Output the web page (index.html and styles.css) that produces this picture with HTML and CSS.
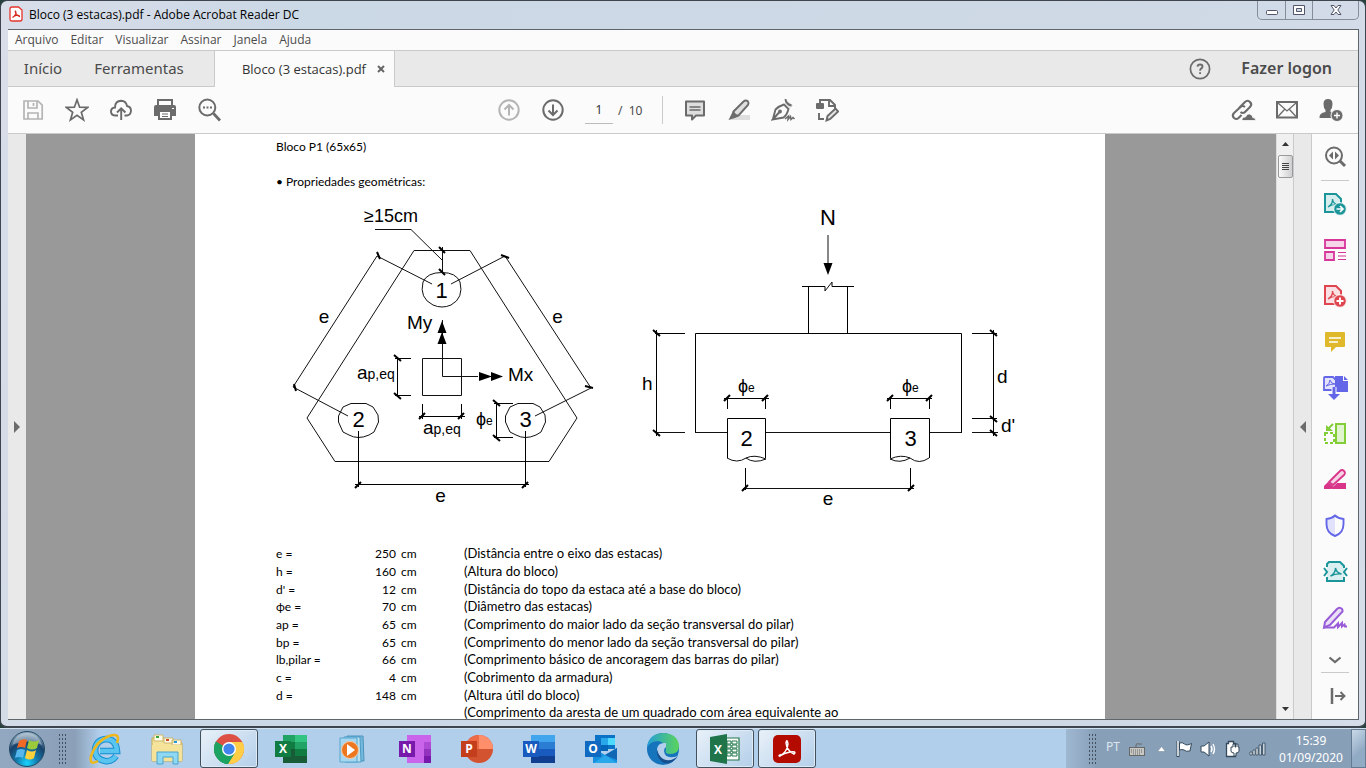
FILE: index.html
```html
<!DOCTYPE html>
<html lang="pt-BR">
<head>
<meta charset="utf-8">
<title>Bloco (3 estacas).pdf - Adobe Acrobat Reader DC</title>
<link rel="stylesheet" href="styles.css">
</head>
<body>
<div class="window">
  <header class="titlebar">
    <svg class="app-icon" width="14" height="16" viewBox="0 0 14 16"><path d="M1 3Q1 1 3 1H9.500L13 4V13Q13 15 11 15H3Q1 15 1 13Z" fill="#fff" stroke="#e5342c" stroke-width="1.300"/><path d="M3.500 11.500C6 10 8 6.500 6.500 5C5.500 5 7 9 10.500 10.500C11 8.500 6 9 3.500 11.500Z" fill="none" stroke="#d7261f" stroke-width="1.100"/></svg>
    <h1 class="window-title">Bloco (3 estacas).pdf - Adobe Acrobat Reader DC</h1>
    <div class="window-controls">
      <button class="control" aria-label="Minimizar"><svg width="12" height="14"><rect x=".5" y="7.500" width="11" height="4" rx="1" fill="#fff" stroke="#555569"/></svg></button>
      <button class="control" aria-label="Restaurar"><svg width="12" height="14"><path d="M.5 2.500h11v9H.5ZM3.500 5.500v3h5v-3Z" fill="#fff" stroke="#555569" fill-rule="evenodd"/></svg></button>
      <button class="control control-close" aria-label="Fechar"><svg width="12" height="14"><path d="M1 2.500h3L6 5l2-2.500h3L7.800 7 11 11.500H8L6 9l-2 2.500H1L4.200 7Z" fill="#fff" stroke="#555569"/></svg></button>
    </div>
  </header>
  <div class="client">
    <nav class="menubar">
      <button class="menu">Arquivo</button><button class="menu">Editar</button><button class="menu">Visualizar</button><button class="menu">Assinar</button><button class="menu">Janela</button><button class="menu">Ajuda</button>
    </nav>
    <div class="tabs">
      <button class="tab tab-home">Início</button>
      <button class="tab tab-tools">Ferramentas</button>
      <div class="tab-current"><span>Bloco (3 estacas).pdf</span><button class="tab-close" aria-label="Fechar guia"><svg width="8" height="8"><path d="M1 1l6 6M7 1L1 7" stroke="#666" stroke-width="2"/></svg></button></div>
      <button class="help" aria-label="Ajuda"><svg width="22" height="22" viewBox="0 0 22 22" fill="none" stroke="#6b6b6b" stroke-width="1.700"><circle cx="11" cy="11" r="9.600"/><path d="M8.500 8.700Q8.700 6.500 11.100 6.500Q13.500 6.500 13.500 8.500Q13.500 9.800 12 10.600Q11.100 11.200 11.100 12.700M11.100 14.300v1.800" stroke-width="1.900"/></svg></button>
      <button class="login">Fazer logon</button>
    </div>
    <div class="toolbar">
      <div class="tools">
        <button class="tool" aria-label="Salvar"><svg width="24" height="24" viewBox="0 0 24 24" fill="none" stroke="#b4b4b4" stroke-width="1.700"><path d="M3 3h14l4.200 4.200V21H3Z"/><path d="M7 3v7h9V3M12.500 5v3M7 21v-6h10v6"/></svg></button>
        <button class="tool" aria-label="Favorito"><svg width="24" height="24" viewBox="0 0 24 24" fill="none" stroke="#6b6b6b" stroke-width="1.700"><path d="M12 1.800l2.600 7.400 8 .2-6.300 4.800 2.300 7.700L12 17.400l-6.600 4.500 2.300-7.700L1.400 9.400l8-.2Z"/></svg></button>
        <button class="tool" aria-label="Enviar"><svg width="24" height="24" viewBox="0 0 24 24" fill="none" stroke="#6b6b6b" stroke-width="1.900"><path d="M9 17.500H6Q1.800 17 2 13.200Q2.300 9.700 6 9.500Q6 3 12.200 2.800Q17 3 18 8Q22 8.700 22 12.800Q21.700 17 18 17.500H15.500M12.200 22V10.700M8 14.500l4.200-4.200 4.200 4.200"/></svg></button>
        <button class="tool" aria-label="Imprimir"><svg width="24" height="24" viewBox="0 0 24 24"><path d="M5 2h14v6H5Z" fill="#fbfbfb" stroke="#6b6b6b" stroke-width="2"/><path d="M3 7h18q2 0 2 2v9h-4v4H5v-4H1V9q0-2 2-2Z" fill="#6b6b6b"/><path d="M7 14h10v6H7Z" fill="#fff"/><path d="M9 16h6M9 18.500h6M19 11h2" stroke="#6b6b6b"/><path d="M19 10.500h2" stroke="#fff"/></svg></button>
        <button class="tool" aria-label="Localizar"><svg width="24" height="24" viewBox="0 0 24 24" fill="none" stroke="#6b6b6b"><circle cx="10.300" cy="9.500" r="8" stroke-width="2"/><path d="M16.500 15.500l6.500 7" stroke-width="2.800"/><path d="M6 9.500h2m1.500 0h2m1.500 0h2" stroke-width="2"/></svg></button>
      </div>
      <div class="tools tools-page">
        <button class="tool" aria-label="Página anterior"><svg width="24" height="24" viewBox="0 0 24 24" fill="none" stroke="#b4b4b4" stroke-width="2"><circle cx="12" cy="12" r="9.700"/><path d="M12 17.500V7.500M7.500 11.500L12 7l4.500 4.500"/></svg></button>
        <button class="tool" aria-label="Próxima página"><svg width="24" height="24" viewBox="0 0 24 24" fill="none" stroke="#6b6b6b" stroke-width="2"><circle cx="12" cy="12" r="9.700"/><path d="M12 6.500v10M7.500 12.500L12 17l4.500-4.500"/></svg></button>
        <label class="page-field"><input class="page-input" aria-label="Página" value="1"><span>/&nbsp; 10</span></label>
        <button class="tool" aria-label="Comentário"><svg width="24" height="24" viewBox="0 0 24 24"><path d="M3 3.500h18v14h-8l-4 4v-4H3Z" fill="#dedede" stroke="#6b6b6b" stroke-width="2" stroke-linejoin="round"/><path d="M6.500 9h11M6.500 12h11" stroke="#6b6b6b" stroke-width="1.300"/></svg></button>
        <button class="tool" aria-label="Realçar"><svg width="24" height="24" viewBox="0 0 24 24"><path d="M8 17h15v5H3Z" fill="#dedede"/><path d="M6.500 13.500L16.500 3.500Q18.500 1.800 20.700 3Q22.300 5 21 7L11.500 17.500H6.500Z" fill="#dedede" stroke="#6b6b6b" stroke-width="1.900"/><path d="M6 13l5.500 5.500L8 20l-6.500 2Z" fill="#6b6b6b"/></svg></button>
        <button class="tool" aria-label="Assinar"><svg width="24" height="24" viewBox="0 0 24 24" fill="none" stroke="#6b6b6b" stroke-width="1.900"><path d="M15.500 2l6.500 5.500-3 2.500-5.500-4Z" fill="#dedede" stroke="none"/><path d="M14.500 1q0 3 2 4.500 1.500 1.500 4 2M1.800 21.500L4.500 11.500Q8 8 13 6.500L17.500 11Q16 17 12.500 19.500L1.800 21.500 8 14.500"/><circle cx="9" cy="13.500" r="1"/><path d="M14 21l3.500-3-.5 3.500 2.500-3 .5 3 2-2 1.500 1.500" stroke-width="1.500"/></svg></button>
        <button class="tool" aria-label="Editar PDF"><svg width="24" height="24" viewBox="0 0 24 24" fill="none" stroke="#6b6b6b" stroke-width="1.900"><path d="M5 5V2h10l5 5v4M14 2v6h6M4 15v6h5"/><rect x="1" y="5" width="8" height="6" rx="1" fill="#6b6b6b" stroke="none"/><path d="M11.500 22.500l1-4.500 8-7.500 2.700 3-8 7.500Z" fill="#e5e5e5"/></svg></button>
      </div>
      <div class="tools tools-share">
        <button class="tool" aria-label="Compartilhar link"><svg width="26" height="24" viewBox="0 0 26 24" fill="none" stroke="#6b6b6b" stroke-width="2.100"><path d="M9 10l6-6q2.500-2.500 5 0t0 5l-5 5q-2 2-4.500 0M15 9q-2.500-2-4.500 0L4 15q-2.500 2.500 0 5 2.500 2 4.500 0l3-3"/><path d="M12 22.500q-.5-3.500 3.500-3.500 2-5 6-2 1.200 1 1.200 2.500 3 0 3 3Z" fill="#6b6b6b" stroke="#fbfbfb" stroke-width=".8"/></svg></button>
        <button class="tool" aria-label="Enviar por email"><svg width="24" height="24" viewBox="0 0 24 24" fill="none" stroke="#6b6b6b"><path d="M2 4h20v15.500H2Z" stroke-width="2"/><path d="M3 5l9 8 9-8M3 18.500l6.500-7M21 18.500l-6.500-7" stroke-width="1.300"/></svg></button>
        <button class="tool" aria-label="Convidar pessoas"><svg width="26" height="24" viewBox="0 0 26 24"><path d="M10 1q4.500 0 4.500 5 0 4-2 6v2q4 1 6 3.500v2.500H1.500q-.5-5 6-6v-2q-2-2-2-6Q5.500 1 10 1Z" fill="#6b6b6b"/><circle cx="19" cy="17.500" r="6" fill="#6b6b6b" stroke="#fbfbfb"/><path d="M19 14.500v6M16 17.500h6" stroke="#fff" stroke-width="1.400"/></svg></button>
      </div>
    </div>
    <div class="workspace">
      <button class="side-strip side-left" aria-label="Abrir painel de navegação"><svg width="6" height="12"><path d="M0 0l6 6-6 6Z" fill="#6b6b6b"/></svg></button>
      <main class="viewer">
        <article class="page">
          <h2 class="doc-text">Bloco P1 (65x65)</h2>
          <h3 class="doc-text">• Propriedades geométricas:</h3>
          <div class="figures">
            <svg class="figure" width="310" height="310" viewBox="290 202 310 310" role="img" aria-label="Planta do bloco">
              <g class="line">
                <path d="M414 250.500H470L577 418 549 461.500H335L307 418Z"/>
                <path d="M375 229.500H411L442 260M442.500 247V273"/>
                <path d="M432 284L377 256 293 387 348 416M451 284L505 256 591 388 535 416"/>
                <path class="tick" d="M439 247l6 6M439 269l6 6M377 252l3 7M501 255l8 3M294 384l2 7M585 386l8 2"/>
                <path d="M442 272.500Q456 272.500 460 282 464 298 451 305 442 309 433 305 419 298 423 282 427 272.500 442 272.500Z"/>
                <path d="M351 403.500H366L373 407 378 415 378.500 422 374 432 369 435Q358 440 349 435L343 432 338.500 422V416L343 407Z"/>
                <path d="M518 403.500H533L540 407 545 415 545.500 422 541 432 536 435Q525 440 516 435L510 432 505.500 422V416L510 407Z"/>
                <path d="M422.500 358.500h39v37h-39ZM442.500 320V376.500H478"/>
                <path class="bold" d="M397.500 357V397M395 358.500H411M395 395.500H411M422.500 404V419M461.500 404V419M419 416.500H465M496.500 402V439M494 403.500H513M494 437.500H513M358.500 431V487M525.500 431V487M355 484.500H529"/>
                <path class="tick" d="M394 355l7 6M394 393l7 6M419 419l6-6M458 419l6-6M493 400l7 6M493 435l7 6M355 488l6-6M522 488l6-6"/>
              </g>
              <path d="M442 321l4.500 12h-9ZM442 332l4.500 12h-9ZM503 376.500l-12 4.500v-9ZM492 376.500l-13 4.500v-9Z"/>
              <text x="364" y="222" class="t18">≥15cm</text>
              <text x="441.500" y="297.500" class="t22 mid">1</text><text x="358.500" y="427" class="t22 mid">2</text><text x="525.500" y="427" class="t22 mid">3</text>
              <text x="407" y="329" class="t20">My</text><text x="508" y="381" class="t20">Mx</text>
              <text x="324" y="323" class="t20 mid">e</text><text x="557.500" y="323" class="t20 mid">e</text><text x="440.500" y="502" class="t20 mid">e</text>
              <text x="357" y="379" class="t20">a<tspan class="t14">p,eq</tspan></text><text x="423" y="434" class="t20">a<tspan class="t14">p,eq</tspan></text>
              <text x="476" y="425" class="t18">ϕ<tspan class="t12">e</tspan></text>
            </svg>
            <svg class="figure" width="386" height="310" viewBox="636 202 386 310" role="img" aria-label="Elevação do bloco">
              <g class="line">
                <path d="M828 235V264"/>
                <path class="bold" d="M802 286.500H825V291M832 282V286.500H854M808.500 287V333M847.500 287V333M695.500 432V333.500H961.500V432"/>
                <path d="M825 291L832 282M695 432.500H727M766 432.500H890M930 432.500H962M656 432.500H685M972 432.500H998"/>
                <path class="bold" d="M656.500 330V436M655 333.500H685M972 333.500H997M993.500 330V436M972 418.500H997M727.500 458V418.500H765.500V458M890.500 458V418.500H929.500V458"/>
                <path d="M727 458Q737 464 746 458Q754 464 766 459Q754 454 746 458M929 458Q919 465 910 458Q900 464 890 459Q901 454 910 458"/>
                <path class="bold" d="M727.500 397V409M765.500 397V409M724 398.500H769M890.500 397V409M929.500 397V409M887 398.500H932M745.500 468V490M910.500 468V490"/>
                <path d="M743 488.500H914"/>
                <path class="tick" d="M653 330l7 6M653 430l7 6M990 330l7 6M990 416l7 6M990 430l7 6M724 401l6-6M762 401l6-6M887 401l6-6M926 401l6-6M742 491l6-6M908 491l6-6"/>
              </g>
              <path d="M828 275l-4.500-12h9Z"/>
              <text x="828" y="225" class="t22 mid">N</text><text x="642" y="390" class="t20">h</text><text x="997" y="383" class="t20">d</text><text x="1001" y="432" class="t20">d'</text>
              <text x="738" y="392" class="t18">ϕ<tspan class="t12">e</tspan></text><text x="902" y="392" class="t18">ϕ<tspan class="t12">e</tspan></text>
              <text x="746.500" y="446" class="t22 mid">2</text><text x="910.500" y="446" class="t22 mid">3</text><text x="828" y="505" class="t20 mid">e</text>
            </svg>
          </div>
          <table class="properties doc-text">
            <tbody>
              <tr><th>e =</th><td class="value">250</td><td class="unit">cm</td><td class="note">(Distância entre o eixo das estacas)</td></tr>
              <tr><th>h =</th><td class="value">160</td><td class="unit">cm</td><td class="note">(Altura do bloco)</td></tr>
              <tr><th>d' =</th><td class="value">12</td><td class="unit">cm</td><td class="note">(Distância do topo da estaca até a base do bloco)</td></tr>
              <tr><th>ϕe =</th><td class="value">70</td><td class="unit">cm</td><td class="note">(Diâmetro das estacas)</td></tr>
              <tr><th>ap =</th><td class="value">65</td><td class="unit">cm</td><td class="note">(Comprimento do maior lado da seção transversal do pilar)</td></tr>
              <tr><th>bp =</th><td class="value">65</td><td class="unit">cm</td><td class="note">(Comprimento do menor lado da seção transversal do pilar)</td></tr>
              <tr><th>lb,pilar =</th><td class="value">66</td><td class="unit">cm</td><td class="note">(Comprimento básico de ancoragem das barras do pilar)</td></tr>
              <tr><th>c =</th><td class="value">4</td><td class="unit">cm</td><td class="note">(Cobrimento da armadura)</td></tr>
              <tr><th>d =</th><td class="value">148</td><td class="unit">cm</td><td class="note">(Altura útil do bloco)</td></tr>
              <tr class="last"><th></th><td class="value">65</td><td></td><td class="note">(Comprimento da aresta de um quadrado com área equivalente ao</td></tr>
            </tbody>
          </table>
        </article>
      </main>
      <div class="scrollbar">
        <button class="scroll-end" aria-label="Rolar para cima"><svg width="7" height="4"><path d="M0 4l3.500-4L7 4Z" fill="#333"/></svg></button>
        <span class="thumb"><i></i><i></i><i></i><i></i></span>
        <button class="scroll-end scroll-down" aria-label="Rolar para baixo"><svg width="7" height="4"><path d="M0 0l3.500 4L7 0Z" fill="#333"/></svg></button>
      </div>
      <button class="side-strip side-right" aria-label="Ocultar painel de ferramentas"><svg width="6" height="12"><path d="M6 0L0 6l6 6Z" fill="#6b6b6b"/></svg></button>
      <aside class="rail">
        <button class="rail-item" aria-label="Pesquisar ferramentas"><svg width="24" height="24" viewBox="0 0 24 24" fill="none" stroke="#6b6b6b"><circle cx="11" cy="10.500" r="8" stroke-width="2"/><path d="M17 16l5 5" stroke-width="3"/><path d="M10 6.500v8l-4-4ZM12 6.500v8l4-4Z" fill="#6b6b6b" stroke="none"/></svg></button>
        <hr class="rail-line">
        <button class="rail-item" aria-label="Exportar PDF"><svg width="24" height="24" viewBox="0 0 24 24"><path d="M2 2h11l5 5v13H2Z" fill="#d8eeee" stroke="#1b959a" stroke-width="2"/><path d="M5 15q5-3 4.500-8Q10 12 15 12.500 9 12 5 15Z" fill="none" stroke="#1b959a" stroke-width="1.300"/><circle cx="17" cy="17" r="6.300" fill="#1b959a" stroke="#fbfbfb"/><path d="M13.500 17h6M17 14l3 3-3 3" fill="none" stroke="#fff" stroke-width="1.700"/></svg></button>
        <button class="rail-item" aria-label="Organizar páginas"><svg width="24" height="24" viewBox="0 0 24 24" fill="#f5d3e8" stroke="#d8359a" stroke-width="1.800"><path d="M2 2h20v8H2ZM2 14h9v8H2Z"/><path d="M15 14.500h8M15 18h8M15 21.500h8" stroke-width="1.200"/></svg></button>
        <button class="rail-item" aria-label="Criar PDF"><svg width="24" height="24" viewBox="0 0 24 24"><path d="M2 2h11l5 5v13H2Z" fill="#fae0e2" stroke="#df454e" stroke-width="2"/><path d="M5 15q5-3 4.500-8Q10 12 15 12.500 9 12 5 15Z" fill="none" stroke="#df454e" stroke-width="1.300"/><circle cx="17" cy="17" r="6.300" fill="#df454e" stroke="#fbfbfb"/><path d="M13.500 17h7M17 13.500v7" stroke="#fff" stroke-width="1.900"/></svg></button>
        <button class="rail-item" aria-label="Comentar"><svg width="24" height="24" viewBox="0 0 24 24"><path d="M3 2h18q1 0 1 1v13q0 1-1 1h-8l-5 5v-5H3q-1 0-1-1V3q0-1 1-1Z" fill="#dfb92b"/><path d="M6 8h12M6 12h9" stroke="#fff" stroke-width="1.500"/></svg></button>
        <button class="rail-item" aria-label="Combinar arquivos"><svg width="26" height="26" viewBox="0 0 26 26"><path d="M10 15H2V3q0-1 1-1h8l3 3v10h-2" fill="#e3e3fb" stroke="#6466e8" stroke-width="1.800"/><path d="M4 11q4-2 4-6 1 4 5 4-5 0-9 2Z" fill="none" stroke="#6466e8"/><path d="M13 1h8v5h5v11H13Z" fill="#6466e8"/><path d="M22 1v4h4Z" fill="#6466e8"/><path d="M12 12v10M7 20l5 4 5-4" fill="none" stroke="#fbfbfb" stroke-width="5"/><path d="M12 12v8" stroke="#6466e8" stroke-width="3"/><path d="M6 19h12l-6 6Z" fill="#6466e8"/></svg></button>
        <button class="rail-item" aria-label="Organizar"><svg width="24" height="24" viewBox="0 0 24 24" fill="none" stroke="#83ce38" stroke-width="2"><path d="M13 2h9v19h-9Z" fill="#e1f4d0"/><path d="M2 11v10h9V11Z" stroke-dasharray="3 2"/><path d="M10 2L5 7"/><path d="M3 3v6h7Z" fill="#83ce38" stroke="none"/></svg></button>
        <button class="rail-item" aria-label="Realçar e redigir"><svg width="24" height="24" viewBox="0 0 24 24"><path d="M14 15h9v6H8Z" fill="#d8358a"/><path d="M6 14L17 3q2-2 4 0t0 4L10 17Z" fill="#f5d3e4" stroke="#d8358a" stroke-width="1.800"/><path d="M5 14l6 5-3 2H1v-3Z" fill="#d8358a"/></svg></button>
        <button class="rail-item" aria-label="Proteger"><svg width="24" height="24" viewBox="0 0 24 24"><path d="M12 2v20Q3 19 3 9V5q6 0 9-3Z" fill="#e1e1fb"/><path d="M12 1.500q3 3 8.500 3.500V10q0 9-8.500 12Q3.500 19 3.500 10V5Q9 4.500 12 1.500Z" fill="none" stroke="#6466e8" stroke-width="1.900"/></svg></button>
        <button class="rail-item" aria-label="Compactar PDF"><svg width="26" height="24" viewBox="0 0 26 24" fill="none" stroke="#1b959a" stroke-width="2"><path d="M5 3h13l4 4v14H5Z" fill="#dceff0" stroke="none"/><path d="M5 7V4l2-2h11l4 4v2M5 17v4h17v-4"/><path d="M8.500 16q5-3 5-8 1 5 6 6-6-.5-11 2Z" stroke-width="1.400"/><path d="M2 8l3 4-3 4M25 8l-3 4 3 4"/></svg></button>
        <button class="rail-item" aria-label="Preencher e assinar"><svg width="26" height="24" viewBox="0 0 26 24" fill="none" stroke="#985cd7" stroke-width="2"><path d="M3 16L15 3q2.500-2.500 5 0 1.500 2.500-1 4L8 19l-6 2.500Z" fill="#ebdff8"/><path d="M2 21.500h10l4-4v3.500l4-4v3.500l2.500-2 .5 2h2"/></svg></button>
        <button class="rail-item rail-more" aria-label="Mais ferramentas"><svg width="14" height="8"><path d="M1.500 1.500L7 6l5.500-4.500" fill="none" stroke="#6b6b6b" stroke-width="2.200"/></svg></button>
        <hr class="rail-line">
        <button class="rail-item rail-exit" aria-label="Recolher"><svg width="16" height="16"><path d="M2 0v16" stroke="#6b6b6b" stroke-width="2.500"/><path d="M5 8h9M10.500 4l4 4-4 4" fill="none" stroke="#6b6b6b" stroke-width="1.900"/></svg></button>
      </aside>
    </div>
  </div>
</div>
<footer class="taskbar">
  <button class="start" aria-label="Iniciar"><svg width="38" height="38" viewBox="0 0 38 38"><defs><radialGradient id="orb" cx=".5" cy=".9" r=".85"><stop offset="0" stop-color="#18d5ff"/><stop offset=".35" stop-color="#137cae"/><stop offset=".7" stop-color="#17416b"/><stop offset="1" stop-color="#8ba8bd"/></radialGradient></defs><circle cx="19" cy="19" r="17.500" fill="url(#orb)" stroke="#254a64"/><path d="M4 15Q8 3 19 3t15 12Q20 8 4 15Z" fill="#fff" opacity=".35"/><path d="M11 11q4-3 8-1l-2 8q-4-2-8 0Z" fill="#f06a25"/><path d="M21 10q5 3 10 0l-2 8q-5 3-10 0Z" fill="#9bca3b"/><path d="M9 20q4-2 8 0l-2 8q-4-2-8 0Z" fill="#55b7ed"/><path d="M19 20q5 3 9 0l-2 8q-4 3-9 0Z" fill="#fcd13b"/></svg></button>
  <span class="grip"></span>
  <nav class="apps">
    <button class="app" aria-label="Internet Explorer"><svg width="34" height="34" viewBox="0 0 34 34" fill="none"><path d="M28 24Q24 30 17 29 7 27 7 18 8 8 18 7q10 0 11 12H12" stroke="#178ed0" stroke-width="6.500"/><path d="M28 24Q24 30 17 29 7 27 7 18 8 8 18 7q10 0 11 12H12" stroke="#58c4ef" stroke-width="4.500"/><path d="M29 11Q33 0 21 4 8 9 3 24q-2 10 7 5" stroke="#eeb81c" stroke-width="2.500"/></svg></button>
    <button class="app" aria-label="Explorador"><svg width="34" height="34" viewBox="0 0 34 34"><path d="M2 6h12l2 3h14l2 2v18H2Z" fill="#f4e49c" stroke="#c2a84d"/><path d="M4 3h9v6H4ZM14 6h9v5h-9ZM22 8h9v5h-9Z" fill="#fffbe9" stroke="#ccb66b"/><path d="M6 4h3v2H6Z" fill="#32a542"/><path d="M16 7h3v2h-3Z" fill="#d34b25"/><path d="M24 9h3v2h-3Z" fill="#2798d7"/><path d="M2 13h30v16H2Z" fill="#f5e399"/><path d="M7 32V20H28v12h-5v-7H13v7Z" fill="#8ed8f3" stroke="#4aa4ce"/></svg></button>
    <button class="app app-open" aria-label="Chrome"><svg width="32" height="32" viewBox="0 0 32 32"><circle cx="16" cy="16" r="15" fill="#dd5144"/><path d="M3 8.500A15 15 0 0 0 15 31L22 20Z" fill="#1ca261"/><path d="M16 9h13.300A15 15 0 0 1 15 31L21 20Z" fill="#ffcd46"/><path d="M3 8.500L9.500 20Q16 26 22 20L15 31A15 15 0 0 1 3 8.500Z" fill="#1ca261"/><circle cx="16" cy="16" r="7" fill="#fff"/><circle cx="16" cy="16" r="5.600" fill="#4284ed"/></svg></button>
    <button class="app" aria-label="Excel"><svg width="32" height="30" viewBox="0 0 32 30"><path d="M8 1h24v28H8Z" fill="#21a366"/><path d="M20 1h12v7H20Z" fill="#33c481"/><path d="M8 8h12v7H8Z" fill="#107c41"/><path d="M8 15h24v14H8Z" fill="#185c37"/><path d="M20 15h12v7H20Z" fill="#107c41"/><path d="M0 7h16v16H0Z" fill="#107c41"/><text x="8" y="19" class="app-letter">X</text></svg></button>
    <button class="app" aria-label="Media Player"><svg width="32" height="32" viewBox="0 0 32 32"><path d="M10 3h16l1 25H10Z" fill="#75b9dc" stroke="#4b94bd"/><path d="M7 4h16l1 25H8Z" fill="#b9dff1" stroke="#4a9bc6"/><path d="M3 5h17v24H3Z" fill="#a7d7f0" stroke="#55a7cd"/><circle cx="13" cy="17" r="8.500" fill="#ed7620" stroke="#f7c9a0"/><path d="M10 11l8 6-8 6Z" fill="#fff"/></svg></button>
    <button class="app" aria-label="OneNote"><svg width="32" height="30" viewBox="0 0 32 30"><path d="M8 1h24v28H8Z" fill="#ca64ea"/><path d="M25 8h7v7h-7Z" fill="#ae4bd5"/><path d="M25 15h7v7h-7Z" fill="#9332bf"/><path d="M25 22h7v7h-7Z" fill="#7719aa"/><path d="M0 7h16v16H0Z" fill="#7719aa"/><text x="8" y="19" class="app-letter">N</text></svg></button>
    <button class="app" aria-label="PowerPoint"><svg width="32" height="30" viewBox="0 0 32 30"><circle cx="18" cy="15" r="14" fill="#d35230"/><path d="M18 1v14H4A14 14 0 0 1 18 1Z" fill="#ed6c47"/><path d="M18 1a14 14 0 0 1 14 14H18Z" fill="#ff8f6b"/><path d="M0 7h16v16H0Z" fill="#c43e1c"/><text x="8" y="19" class="app-letter">P</text></svg></button>
    <button class="app" aria-label="Word"><svg width="32" height="30" viewBox="0 0 32 30"><path d="M8 1h24v28H8Z" fill="#41a5ee"/><path d="M8 8h24v21H8Z" fill="#2b7cd3"/><path d="M8 15h24v14H8Z" fill="#185abd"/><path d="M8 22h24v7H8Z" fill="#103f91"/><path d="M0 7h16v16H0Z" fill="#185abd"/><text x="8" y="19" class="app-letter">W</text></svg></button>
    <button class="app" aria-label="Outlook"><svg width="32" height="30" viewBox="0 0 32 30"><path d="M10 1h20v14H10Z" fill="#0a73c8"/><path d="M16 4h7v7h-7Z" fill="#28a8ea"/><path d="M23 4h7v7h-7Z" fill="#50d9ff"/><path d="M16 11h7v6h-7Z" fill="#0364b8"/><path d="M8 14l12 7 12-7v15H8Z" fill="#1490df"/><path d="M20 21l12-7v12Z" fill="#1066b5"/><path d="M9 29l11-8 12 8Z" fill="#28a8ea"/><path d="M0 7h16v16H0Z" fill="#0f69c0"/><text x="8" y="19" class="app-letter">O</text></svg></button>
    <button class="app" aria-label="Edge"><svg width="34" height="34" viewBox="0 0 34 34"><defs><linearGradient id="edge"><stop stop-color="#239ed7"/><stop offset="1" stop-color="#5bd45b"/></linearGradient></defs><circle cx="17" cy="17" r="16" fill="#1674bd"/><path d="M1 15Q3 1 18 1q14 1 15 13 0 8-9 8-6 0-4-5 0-7-8-8Q5 9 1 15Z" fill="url(#edge)"/><path d="M20 11q-8-1-9 6 0 10 11 12 6 0 10-5-13 4-14-5 0-3 2-4Z" fill="#b3cfeb"/><path d="M11 18q-1 8 7 13 8 2 14-7-5 5-12 4-6-1-9-10Z" fill="#17508f"/></svg></button>
    <button class="app app-open" aria-label="Pasta do Excel"><svg width="32" height="30" viewBox="0 0 32 30"><path d="M15 4h15v22H15Z" fill="#fff" stroke="#20794a" stroke-width="1.200"/><path d="M18 7h4v3h-4Zm5 0h5v3h-5Zm-5 4h4v3h-4Zm5 0h5v3h-5Zm-5 4h4v3h-4Zm5 0h5v3h-5Zm-5 4h4v3h-4Zm5 0h5v3h-5Z" fill="#fff" stroke="#20794a"/><path d="M1 3l17-3v30L1 27Z" fill="#20744a"/><text x="9" y="20" class="app-letter">X</text></svg></button>
    <button class="app app-open" aria-label="Acrobat Reader"><svg width="28" height="28" viewBox="0 0 28 28"><rect width="28" height="28" rx="5" fill="#b30b00"/><path d="M7 21Q14 17 15 9 14 3 13 8q1 8 8 11 3-3-4-2-6 1-10 4-2 0 0-1Z" fill="none" stroke="#fff" stroke-width="1.500"/></svg></button>
  </nav>
  <div class="tray">
    <span class="grip"></span>
    <button class="language">PT</button>
    <button class="tray-item" aria-label="Teclado"><svg width="16" height="14"><path d="M7 5V3q0-2 3-1h3" fill="none" stroke="#666"/><rect x=".5" y="5.500" width="15" height="8" fill="#c7c7c3" stroke="#686868"/><path d="M2 8h12M2 10h12M4 12h8" stroke="#666" stroke-dasharray="1 1"/></svg></button>
    <button class="tray-item" aria-label="Mostrar ícones ocultos"><svg width="9" height="6"><path d="M.5 5.500l4-5 4 5Z" fill="#fff" stroke="#6d7f91" stroke-width=".5"/></svg></button>
    <button class="tray-item" aria-label="Central de ações"><svg width="18" height="18" viewBox="0 0 18 18"><path d="M2 1v16" stroke="#34495b" stroke-width="3"/><path d="M3.500 3q3-1 5 1 2 2 7-.5L14 11q-4 1-6-1-2-1-4.500 0Z" fill="#fff" stroke="#34495b"/><path d="M2 1v15" stroke="#fff" stroke-width="1.500"/></svg></button>
    <button class="tray-item" aria-label="Volume"><svg width="18" height="18" viewBox="0 0 18 18"><path d="M1 6h3l5-4v14l-5-4H1Z" fill="#fff" stroke="#34495b"/><path d="M11 6q2 3 0 6M13 4q3 5 0 10" fill="none" stroke="#fff" stroke-width="1.400"/></svg></button>
    <button class="tray-item" aria-label="Energia"><svg width="18" height="18" viewBox="0 0 18 18"><path d="M2.500 3.500h2v-2h5v2h2v13h-9Z" fill="#fff" stroke="#34495b" stroke-width="1.300"/><path d="M9 4v3H7v4q0 2 3 2v3h2v-3q3 0 3-2V7h-1V4h-2v3h-1V4Z" fill="#fff" stroke="#34495b"/></svg></button>
    <button class="tray-item" aria-label="Rede"><svg width="17" height="14" viewBox="0 0 17 14" stroke="#34495b" stroke-width=".8"><path d="M1 10h2v3H1ZM4 8h2v5H4ZM7 6h2v7H7Z" fill="#fff"/><path d="M10 3h2.500v10H10ZM13.500 1H16v12h-2.500Z" fill="#c8d2dc"/></svg></button>
    <button class="clock"><time>15:39</time><time>01/09/2020</time></button>
    <button class="show-desktop" aria-label="Mostrar área de trabalho"></button>
  </div>
</footer>
</body>
</html>
```

FILE: styles.css
```css
* { box-sizing: border-box; }
body {
  margin: 0;
  height: 100vh;
  display: flex;
  flex-direction: column;
  overflow: hidden;
  background: #24413b;
  color: #4b4b4b;
  font-family: "Noto Sans", "Open Sans", sans-serif;
  font-size: 12px;
}
button {
  display: flex;
  align-items: center;
  justify-content: center;
  padding: 0;
  border: 0;
  background: none;
  color: inherit;
  font: inherit;
  white-space: nowrap;
}
svg { display: block; flex: none; }

.window {
  flex: 1;
  min-height: 0;
  display: flex;
  flex-direction: column;
  padding: 0 6px 6px 7px;
  border: 1px solid #3f454e;
  border-bottom-width: 2px;
  border-radius: 7px;
  background: linear-gradient(100deg, #d9dee9, #cbd8e5 20%, #cfd9e6 80%, #d5dde9);
}
.titlebar { display: flex; flex: 0 0 28px; align-items: center; gap: 6px; padding-bottom: 2px; }
.app-icon { margin-left: 1px; }
.window-title {
  flex: 1;
  margin: 0;
  color: #000;
  font-family: "Open Sans", sans-serif;
  font-size: 12px;
  font-weight: 400;
}
.window-controls {
  display: flex;
  align-self: flex-start;
  height: 19px;
  border: 1px solid #858c9c;
  border-top: 0;
  border-radius: 0 0 5px 5px;
}
.control { width: 27px; }
.control + .control { border-left: 1px solid #858c9c; }
.control-close { width: 46px; }

.client {
  flex: 1;
  min-height: 0;
  display: flex;
  flex-direction: column;
  border: 1px solid #60656b;
  border-left: 0;
  background: #fbfbfb;
}
.menubar { display: flex; flex: 0 0 20px; gap: 12px; padding: 0 7px 2px; font-family: "Open Sans", sans-serif; }
.tabs {
  display: flex;
  flex: 0 0 37px;
  border: 1px solid #cacaca;
  border-width: 1px 0;
  background: #e9e9e9;
}
.tab-home { width: 70px; }
.tab-tools { width: 122px; }
.tab-home, .tab-tools { padding-bottom: 2px; font-size: 15px; }
.tab-current {
  display: flex;
  align-items: center;
  justify-content: flex-end;
  gap: 11px;
  width: 181px;
  margin: 0 0 -1px 14px;
  padding: 0 9px 1px 0;
  border: 1px solid #cacaca;
  border-width: 0 1px;
  background: #fbfbfb;
  color: #333;
  font-family: "Open Sans", sans-serif;
  font-size: 13px;
}
.help { width: 24px; margin-left: auto; }
.login { margin: 0 26px 0 29px; padding-bottom: 2px; font-size: 16px; font-weight: 600; }

.toolbar {
  display: grid;
  grid-template-columns: 1fr auto 1fr;
  flex: 0 0 47px;
  border-bottom: 1px solid #cacaca;
}
.tools { display: flex; padding-left: 3px; }
.tools-page { padding: 0 30px 0 0; }
.tools-share { justify-content: flex-end; padding-right: 5px; }
.tool { width: 44px; }
.page-field {
  display: flex;
  align-items: center;
  gap: 5px;
  width: 88px;
  height: 28px;
  margin: 9px 10px 0 0;
  padding-left: 10px;
  border-right: 1px solid #cacaca;
}
.page-input {
  width: 28px;
  height: 28px;
  padding: 0;
  border: 0;
  border-bottom: 1px solid #bcbcbc;
  background: none;
  color: #333;
  font: inherit;
  text-align: center;
}

.workspace { flex: 1; min-height: 0; display: flex; }
.side-strip { flex: 0 0 18px; background: #e9e9e9; }
.side-right { flex-basis: 19px; border: 1px solid #cacaca; border-width: 0 1px; }
.viewer { flex: 1; min-width: 0; padding-right: 2px; overflow: hidden; background: #999; }
.page {
  max-width: 910px;
  min-height: 100%;
  margin: 0 auto;
  padding: 4px 81px;
  background: #fff;
}
.doc-text {
  margin: 0;
  color: #000;
  font-family: Lato, sans-serif;
  font-size: 12px;
  font-weight: 400;
  line-height: 17px;
}
h3.doc-text { margin: 18px 0 12px; }
.figures { display: flex; gap: 36px; padding-left: 14px; }
.figure { font-family: "Liberation Sans", Arial, sans-serif; }
.line { fill: none; stroke: #111; stroke-width: 1; }
.bold { stroke: #000; }
.tick { stroke: #000; stroke-width: 2; }
.mid { text-anchor: middle; }
.t12 { font-size: 12px; }
.t14 { font-size: 14px; }
.t18 { font-size: 18px; }
.t20 { font-size: 19px; }
.t22 { font-size: 22px; }
.properties { height: 195px; margin-top: 33px; border-collapse: collapse; }
.properties th, .properties td { padding: 0; text-align: left; font-weight: 400; white-space: nowrap; vertical-align: middle; }
.properties th { width: 70px; }
.properties .value { width: 50px; text-align: right; }
.properties .unit { width: 68px; padding-left: 5px; }
.properties .note { font-size: 13px; }
.properties .last { height: 36px; }
.properties .last .note { vertical-align: top; }

.scrollbar {
  display: flex;
  flex: 0 0 17px;
  flex-direction: column;
  align-items: center;
  border-left: 1px solid #ddd;
  background: #f0f0f0;
}
.scroll-end { width: 16px; height: 20px; }
.scroll-down { margin-top: auto; }
.thumb {
  display: flex;
  flex-direction: column;
  align-items: center;
  justify-content: center;
  gap: 1px;
  width: 15px;
  height: 23px;
  margin-top: 1px;
  border: 1px solid #999;
  border-radius: 2px;
  background: linear-gradient(90deg, #fafafa, #cfcfd1);
}
.thumb i { width: 7px; height: 1px; background: #444; }

.rail { display: flex; flex: 0 0 46px; flex-direction: column; align-items: center; }
.rail-item { flex: 0 0 46px; width: 46px; }
.rail-line { width: 28px; height: 1px; margin: 0; border: 0; background: #cacaca; }
.rail-more { flex: 1 1 31px; padding-top: 6px; }
.rail-exit { padding-left: 6px; }

.taskbar {
  display: flex;
  flex: 0 0 40px;
  align-items: stretch;
  border-top: 1px solid #d1e0ee;
  background: linear-gradient(90deg, #91a8c0, #8ba0b8 75px, #b1ceeb 100px);
}
.start { width: 54px; }
.grip {
  align-self: center;
  width: 9px;
  height: 31px;
  margin-left: 4px;
  background: radial-gradient(circle, #42505f 1px, transparent 1px) 0 0 / 3px 4px;
}
.apps { display: flex; gap: 4px; margin-left: 9px; }
.app { width: 58px; }
.app-open {
  border: 1px solid #43515f;
  border-radius: 3px;
  background: linear-gradient(135deg, #e8f1f9, #b4cfe9);
  box-shadow: inset 0 0 0 1px #ddebf7;
}
.app-letter { fill: #fff; font-family: "Open Sans", sans-serif; font-size: 12px; font-weight: 700; text-anchor: middle; }
.tray { display: flex; margin-left: auto; padding-left: 18px; background: linear-gradient(90deg, #9fb8d1, #889fb8 30px); color: #fff; }
.language { width: 28px; padding: 0 0 4px 4px; color: #dce5ee; }
.tray-item { width: 24px; }
.clock { display: flex; flex-direction: column; width: 82px; padding-left: 2px; line-height: 17px; }
.show-desktop { width: 15px; border: 1px solid #657b91; background: linear-gradient(135deg, #c9d9e8, #92abc4 60%); }
```
